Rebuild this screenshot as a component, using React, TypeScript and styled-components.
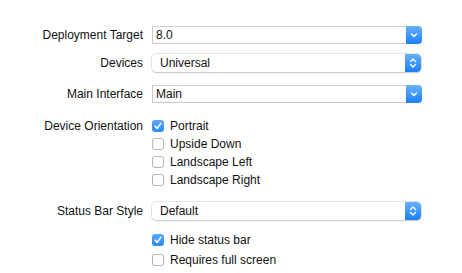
import React from "react";
import styled, { createGlobalStyle } from "styled-components";

const Global = createGlobalStyle`
  html, body { margin: 0; padding: 0; background: #fff; }
  body { font-family: "Liberation Sans", Arial, sans-serif; font-size: 12px; color: #111; }
`;

const Page = styled.div`
  width: 462px;
  height: 273px;
  display: grid;
  grid-template-columns: 143px 270px;
  column-gap: 9px;
  align-content: start;
  padding-top: 26px;
  box-sizing: border-box;
`;

const Label = styled.div<{ $mt?: number }>`
  grid-column: 1;
  text-align: right;
  height: 18px;
  line-height: 18px;
  margin-top: ${(p) => p.$mt ?? 0}px;
  white-space: nowrap;
`;

const Cell = styled.div<{ $mt?: number }>`
  grid-column: 2;
  margin-top: ${(p) => p.$mt ?? 0}px;
  display: flex;
  flex-direction: column;
`;

const Combo = styled.div`
  height: 18px;
  display: flex;
  box-sizing: border-box;
`;

const ComboField = styled.div`
  flex: 1;
  border: 1px solid #c9c9c9;
  border-right: none;
  border-top-color: #d2d2d2;
  box-sizing: border-box;
  padding-left: 3px;
  line-height: 16px;
  background: #fff;
`;

const BlueButton = styled.div`
  width: 16px;
  height: 18px;
  box-sizing: border-box;
  background: linear-gradient(#69b1fb, #1a7ffa);
  border-radius: 0 4px 4px 0;
  display: flex;
  align-items: center;
  justify-content: center;
`;

const Popup = styled.div`
  height: 18px;
  display: flex;
  border-radius: 4px;
  box-shadow: 0 0 0 0.5px rgba(0, 0, 0, 0.22), 0 1px 1px rgba(0, 0, 0, 0.12);
  background: #fff;
  overflow: hidden;
  width: 269px;
`;

const PopupText = styled.div`
  flex: 1;
  padding-left: 8px;
  line-height: 18px;
`;

const CheckRow = styled.label<{ $h?: number }>`
  height: ${(p) => p.$h ?? 18}px;
  display: flex;
  align-items: center;
  gap: 6px;
`;

const Box = styled.span<{ $on?: boolean }>`
  width: 12px;
  height: 12px;
  box-sizing: border-box;
  border-radius: 3px;
  display: flex;
  align-items: center;
  justify-content: center;
  background: ${(p) => (p.$on ? "linear-gradient(#5aa8fb, #2d8af9)" : "#fff")};
  border: ${(p) => (p.$on ? "none" : "1px solid #b4b4b4")};
`;

const Chevron = () => (
  <svg width="8" height="6" viewBox="0 0 8 6">
    <path d="M1.5 2 L4 4.5 L6.5 2" fill="none" stroke="#fff" strokeWidth="1.4" strokeLinecap="round" strokeLinejoin="round" />
  </svg>
);

const UpDown = () => (
  <svg width="8" height="12" viewBox="0 0 8 12">
    <path d="M1.5 4.5 L4 2 L6.5 4.5 M1.5 7.5 L4 10 L6.5 7.5" fill="none" stroke="#fff" strokeWidth="1.3" strokeLinecap="round" strokeLinejoin="round" />
  </svg>
);

const Check = () => (
  <svg width="10" height="10" viewBox="0 0 10 10">
    <path d="M2.2 5.2 L4.2 7.4 L7.8 2.4" fill="none" stroke="#fff" strokeWidth="1.6" strokeLinecap="round" strokeLinejoin="round" />
  </svg>
);

const Checkbox = ({ on, text, h }: { on?: boolean; text: string; h?: number }) => (
  <CheckRow $h={h}>
    <Box $on={on}>{on && <Check />}</Box>
    {text}
  </CheckRow>
);

export default function App() {
  return (
    <>
      <Global />
      <Page>
        <Label>Deployment Target</Label>
        <Cell>
          <Combo>
            <ComboField>8.0</ComboField>
            <BlueButton><Chevron /></BlueButton>
          </Combo>
        </Cell>

        <Label $mt={10}>Devices</Label>
        <Cell $mt={10}>
          <Popup>
            <PopupText>Universal</PopupText>
            <BlueButton><UpDown /></BlueButton>
          </Popup>
        </Cell>

        <Label $mt={13}>Main Interface</Label>
        <Cell $mt={13}>
          <Combo>
            <ComboField>Main</ComboField>
            <BlueButton><Chevron /></BlueButton>
          </Combo>
        </Cell>

        <Label $mt={14}>Device Orientation</Label>
        <Cell $mt={14}>
          <Checkbox on text="Portrait" />
          <Checkbox text="Upside Down" />
          <Checkbox text="Landscape Left" />
          <Checkbox text="Landscape Right" />
        </Cell>

        <Label $mt={13}>Status Bar Style</Label>
        <Cell $mt={13}>
          <Popup>
            <PopupText>Default</PopupText>
            <BlueButton><UpDown /></BlueButton>
          </Popup>
        </Cell>

        <Cell $mt={11}>
          <Checkbox on text="Hide status bar" />
          <Checkbox text="Requires full screen" h={22} />
        </Cell>
      </Page>
    </>
  );
}
